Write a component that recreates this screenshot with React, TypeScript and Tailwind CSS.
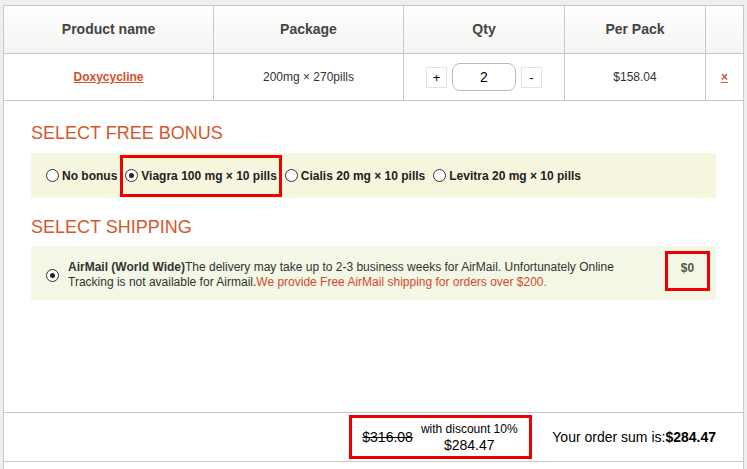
const font = { fontFamily: '"Liberation Sans", Arial, sans-serif' };

function Radio({ checked }: { checked?: boolean }) {
  return (
    <span className="inline-flex items-center justify-center w-[13px] h-[13px] rounded-full border border-[#333] bg-white shrink-0">
      {checked && <span className="w-[5px] h-[5px] rounded-full bg-[#222]" />}
    </span>
  );
}

function BonusOption({ label, checked, boxed }: { label: string; checked?: boolean; boxed?: boolean }) {
  return (
    <label
      className={
        boxed
          ? "flex items-center gap-[3px] h-[42px] px-[2px] border-[3px] border-[#ee0000]"
          : "flex items-center gap-[3px] h-[42px] px-[3px]"
      }
    >
      <Radio checked={checked} />
      <span className="font-bold text-[12px] text-[#222]">{label}</span>
    </label>
  );
}

export default function App() {
  return (
    <div className="min-h-screen bg-[#eeeeee] pt-[5px] pl-[3px] pr-[3px]" style={font}>
      <div className="bg-white border-l border-r border-t border-[#c8c8c8] min-h-[464px] flex flex-col">
        {/* cart table */}
        <div className="grid grid-cols-[210px_190px_161px_141px_1fr] text-center">
          <div className="h-[48px] flex items-center justify-center font-bold text-[14px] text-[#444] bg-gradient-to-b from-white to-[#f4f4f2] border-r border-b border-[#c8c8c8]">
            Product name
          </div>
          <div className="h-[48px] flex items-center justify-center font-bold text-[14px] text-[#444] bg-gradient-to-b from-white to-[#f4f4f2] border-r border-b border-[#c8c8c8]">
            Package
          </div>
          <div className="h-[48px] flex items-center justify-center font-bold text-[14px] text-[#444] bg-gradient-to-b from-white to-[#f4f4f2] border-r border-b border-[#c8c8c8]">
            Qty
          </div>
          <div className="h-[48px] flex items-center justify-center font-bold text-[14px] text-[#444] bg-gradient-to-b from-white to-[#f4f4f2] border-r border-b border-[#c8c8c8]">
            Per Pack
          </div>
          <div className="h-[48px] bg-gradient-to-b from-white to-[#f4f4f2] border-b border-[#c8c8c8]" />

          <div className="h-[47px] flex items-center justify-center border-r border-b border-[#c8c8c8]">
            <a href="#" className="text-[12px] font-bold text-[#d4502a] underline">
              Doxycycline
            </a>
          </div>
          <div className="h-[47px] flex items-center justify-center text-[12px] text-[#333] border-r border-b border-[#c8c8c8]">
            200mg × 270pills
          </div>
          <div className="h-[47px] flex items-center justify-center gap-[5px] border-r border-b border-[#c8c8c8]">
            <button className="w-[21px] h-[21px] border border-[#dde2ec] bg-white text-[13px] text-black leading-none">+</button>
            <div className="w-[64px] h-[28px] rounded-[8px] border border-[#bbbbbb] flex items-center justify-center text-[14px] text-black">
              2
            </div>
            <button className="w-[21px] h-[21px] border border-[#dde2ec] bg-white text-[13px] text-black leading-none">-</button>
          </div>
          <div className="h-[47px] flex items-center justify-center text-[12px] text-[#333] border-r border-b border-[#c8c8c8]">
            $158.04
          </div>
          <div className="h-[47px] flex items-center justify-center border-b border-[#c8c8c8]">
            <a href="#" className="text-[12px] font-bold text-[#d4502a] underline">
              ×
            </a>
          </div>
        </div>

        {/* bonus */}
        <div className="pl-[27px] pr-[27px]">
          <h2 className="text-[18px] text-[#d4582c] leading-none mt-[23px] mb-[11px] font-normal">SELECT FREE BONUS</h2>
          <div className="bg-[#f6f5dd] h-[45px] flex items-center pl-[12px]">
            <BonusOption label="No bonus" />
            <BonusOption label="Viagra 100 mg × 10 pills" checked boxed />
            <BonusOption label="Cialis 20 mg × 10 pills" />
            <span className="w-[2px]" />
            <BonusOption label="Levitra 20 mg × 10 pills" />
          </div>

          <h2 className="text-[18px] text-[#d4582c] leading-none mt-[20px] mb-[10px] font-normal">SELECT SHIPPING</h2>
          <div className="bg-[#f3f7e6] h-[54px] flex items-start pl-[15px] pr-[6px] pt-[5px]">
            <span className="mt-[10px]">
              <Radio checked />
            </span>
            <p className="ml-[9px] w-[560px] text-[12px] leading-[15px] text-[#333] pt-[9px]">
              <b>AirMail (World Wide)</b>The delivery may take up to 2-3 business weeks for AirMail. Unfortunately Online
              Tracking is not available for Airmail.
              <span className="text-[#d9472b]">We provide Free AirMail shipping for orders over $200.</span>
            </p>
            <div className="ml-auto w-[45px] h-[40px] border-[3px] border-[#ee0000] flex justify-center pt-[5px] text-[12px] font-bold text-[#4d5a45]">
              $0
            </div>
          </div>
        </div>

        <div className="h-[112px]" />

        {/* total */}
        <div className="border-t border-b border-[#c8c8c8] h-[50px] flex items-center justify-end pr-[27px]">
          <div className="w-[183px] h-[44px] border-[3px] border-[#ee0000] flex items-center pl-[10px]">
            <span className="text-[14px] text-black line-through">$316.08</span>
            <div className="ml-[8px] flex flex-col items-center leading-[16px]">
              <span className="text-[12px] text-black">with discount 10%</span>
              <span className="text-[14px] text-black">$284.47</span>
            </div>
          </div>
          <div className="ml-[20px] text-[14px] text-black">
            Your order sum is:<b>$284.47</b>
          </div>
        </div>
      </div>
    </div>
  );
}
